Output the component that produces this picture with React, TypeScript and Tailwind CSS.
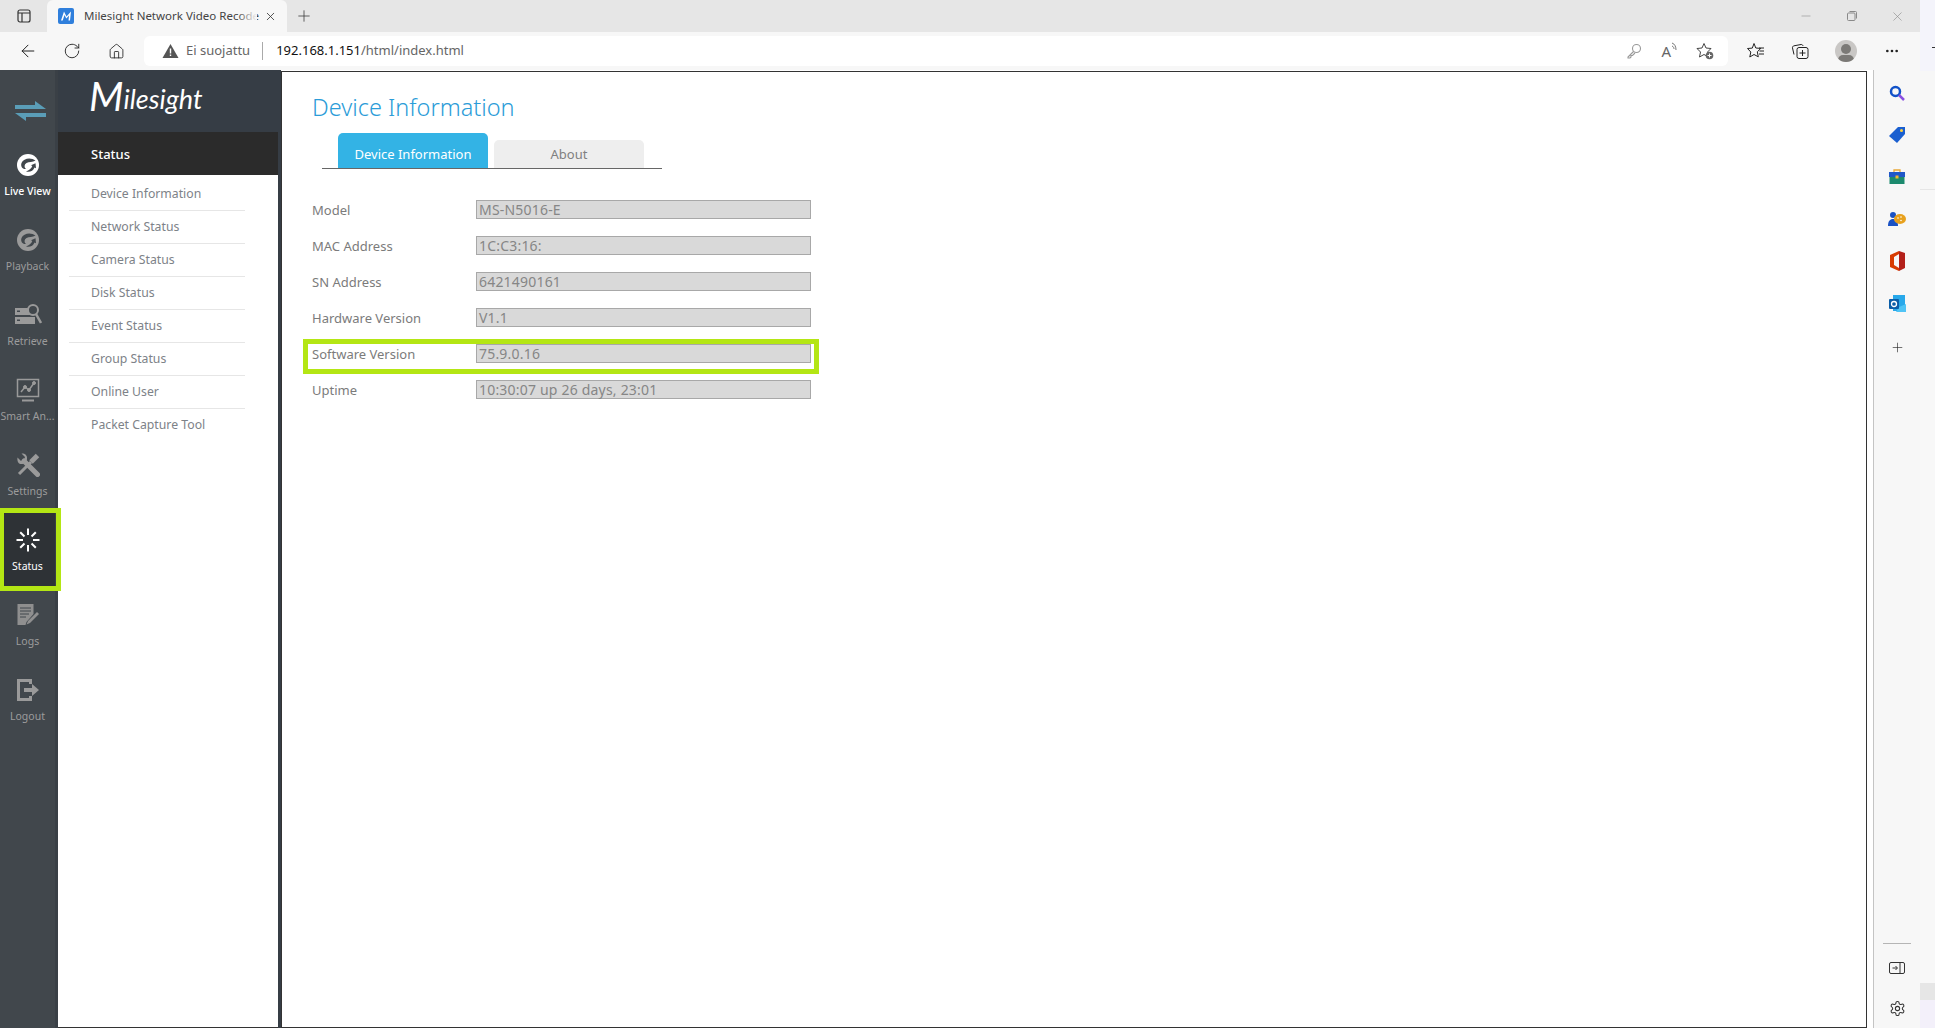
import { ArrowLeft, Ellipsis, Home, Minus, Plus, RotateCw, X } from 'lucide-react'

const font = "font-['Noto_Sans',sans-serif]"

const menuItems = [
  'Device Information',
  'Network Status',
  'Camera Status',
  'Disk Status',
  'Event Status',
  'Group Status',
  'Online User',
  'Packet Capture Tool',
]

const fields = [
  { label: 'Model', value: 'MS-N5016-E' },
  { label: 'MAC Address', value: '1C:C3:16:' },
  { label: 'SN Address', value: '6421490161' },
  { label: 'Hardware Version', value: 'V1.1' },
  { label: 'Software Version', value: '75.9.0.16' },
  { label: 'Uptime', value: '10:30:07 up 26 days, 23:01' },
]

function SwirlIcon({ color, bg }: { color: string; bg: string }) {
  return (
    <svg width="24" height="24" viewBox="0 0 24 24">
      <circle cx="12" cy="12" r="11" fill={color} />
      <path d="M19.500 7.500C15 4 7.500 5 5.500 10c-1.200 3.500 1 6.500 4.500 6-1.800-1.500-2-4.500.5-6 2.500-1.300 6-.5 9-2.500z" fill={bg} />
      <path d="M10 18.500c3.500 1 7.500-.5 8.500-4l1.500.8-.5-5-4.500 2 1.300.8c-.8 2.500-3.300 4.500-6.300 5.400z" fill={bg} />
    </svg>
  )
}

function RetrieveIcon() {
  return (
    <svg width="28" height="24" viewBox="0 0 28 24" fill="#9a9a9a">
      <rect x="1" y="5" width="16" height="7" />
      <rect x="1" y="14" width="20" height="7" />
      <rect x="3" y="7.500" width="3" height="1.500" fill="#41474c" />
      <rect x="3" y="16.500" width="3" height="1.500" fill="#41474c" />
      <circle cx="19" cy="7" r="5" fill="#41474c" stroke="#9a9a9a" strokeWidth="2" />
      <path d="M22 11l5 9" stroke="#9a9a9a" strokeWidth="2.500" />
    </svg>
  )
}

function SmartIcon() {
  return (
    <svg width="24" height="24" viewBox="0 0 24 24" fill="none" stroke="#9a9a9a">
      <rect x="1.500" y="1.500" width="21" height="17" strokeWidth="1.500" />
      <path d="M5 14l4-5 4 3 5-7" strokeWidth="1.500" />
      <circle cx="9" cy="9" r="1.500" fill="#9a9a9a" />
      <circle cx="13" cy="12" r="1.500" fill="#9a9a9a" />
      <circle cx="18" cy="5" r="1.500" fill="#9a9a9a" />
      <path d="M6 22.500h12" strokeWidth="2" />
    </svg>
  )
}

function SettingsIcon() {
  return (
    <svg width="24" height="24" viewBox="0 0 24 24" fill="none" stroke="#9a9a9a">
      {/* screwdriver */}
      <path d="M21.500 2.500L15 9" strokeWidth="5" />
      <path d="M15 9L3 21" strokeWidth="3" />
      {/* wrench */}
      <path d="M8 8l13.500 13.500" strokeWidth="5" strokeLinecap="round" />
      <path d="M1.500 4.500L5 8l3-1 1-3-3.500-3.500C8.500.2 11.500 2 11 6c-.3 3-3 5.500-6.500 5C2 10.500 1 7.500 1.500 4.500z" fill="#9a9a9a" stroke="none" />
    </svg>
  )
}

function SpinnerIcon() {
  const rays = [0, 45, 90, 135, 180, 225, 270, 315]
  return (
    <svg width="24" height="24" viewBox="0 0 24 24" stroke="#fff" strokeWidth="2">
      {rays.map((r) => (
        <line key={r} x1="12" y1={r % 90 === 0 ? 0.5 : 1} x2="12" y2="7" transform={`rotate(${r} 12 12)`} />
      ))}
    </svg>
  )
}

function LogsIcon() {
  return (
    <svg width="24" height="24" viewBox="0 0 24 24" fill="#8f8f8f">
      <path d="M1.500 1h16v10l-7 8-1 3h-8z" />
      <path d="M4 5h11M4 8h11M4 11h9M4 14h6" stroke="#41474c" strokeWidth="1" />
      <path d="M21 9l2 2-9 9-3.500 1.500L12 18z" />
    </svg>
  )
}

function LogoutIcon() {
  return (
    <svg width="24" height="24" viewBox="0 0 24 24" fill="#9a9a9a">
      <path d="M1 1h15v5h-3V4H4v16h9v-2h3v5H1z" />
      <path d="M8 10h8V6l7 6-7 6v-4H8z" />
    </svg>
  )
}

const railItems = [
  { label: 'Live View', icon: <SwirlIcon color="#ffffff" bg="#41474c" />, text: 'text-white font-medium' },
  { label: 'Playback', icon: <SwirlIcon color="#9a9a9a" bg="#41474c" />, text: 'text-[#9c9c9c]' },
  { label: 'Retrieve', icon: <RetrieveIcon />, text: 'text-[#9c9c9c]' },
  { label: 'Smart An...', icon: <SmartIcon />, text: 'text-[#9c9c9c]' },
  { label: 'Settings', icon: <SettingsIcon />, text: 'text-[#9c9c9c]' },
  { label: 'Status', icon: <SpinnerIcon />, text: 'text-white', active: true },
  { label: 'Logs', icon: <LogsIcon />, text: 'text-[#9c9c9c]' },
  { label: 'Logout', icon: <LogoutIcon />, text: 'text-[#9c9c9c]' },
]

function TabBar() {
  return (
    <div className="h-8 bg-[#e6e6e6] flex items-center shrink-0 text-[#333]">
      <div className="w-[47px] flex justify-center">
        <svg width="16" height="16" viewBox="0 0 16 16" fill="none" stroke="#333" strokeWidth="1.200">
          <rect x="2" y="2" width="12" height="12" rx="2" />
          <path d="M2 5h12M6 5v9" />
        </svg>
      </div>
      <div className="w-[240px] h-8 bg-[#f7f7f7] rounded-t-md flex items-center pl-[11px] relative">
        <svg width="16" height="16" viewBox="0 0 16 16" className="shrink-0">
          <rect width="16" height="16" rx="2" fill="#2f7fdc" />
          <path d="M3 12.500L6 3.500l2.500 5L13 3.500 12 12.500h-1.500l.5-5-2.700 3L6.500 7 4.700 12.500z" fill="#fff" />
        </svg>
        <span className="ml-[10px] whitespace-nowrap text-[11.500px] text-[#444]">
          Milesight Network Video Recode
        </span>
        <div className="absolute left-[190px] top-0 w-[20px] h-8 bg-gradient-to-r from-transparent to-[#f7f7f7]" />
        <X size={13} strokeWidth={1.500} className="absolute left-[217px] top-[10px]" />
      </div>
      <Plus size={18} strokeWidth={1} className="ml-[8px]" />
      <div className="ml-auto flex items-center text-[#8a8a8a]">
        <Minus size={14} strokeWidth={1} />
        <svg width="12" height="12" viewBox="0 0 12 12" fill="none" stroke="#8a8a8a" className="ml-[33px]">
          <rect x="1.500" y="3" width="7.500" height="7.500" rx="1" />
          <path d="M3.500 1.500h6a1 1 0 0 1 1 1v6" />
        </svg>
        <X size={15} strokeWidth={1} className="ml-[32px] mr-[15px]" />
      </div>
    </div>
  )
}

function Toolbar() {
  return (
    <div className="h-[38px] bg-[#f7f7f7] flex items-center shrink-0 text-[#222]">
      <ArrowLeft size={20} strokeWidth={1.200} className="ml-[18px]" />
      <RotateCw size={18} strokeWidth={1.200} className="ml-[25px]" />
      <Home size={17} strokeWidth={1.200} className="ml-[27px]" />
      <div className="ml-[19px] w-[1584px] h-[30px] bg-white rounded-md flex items-center pl-[18px] text-[13px]">
        <svg width="17" height="16" viewBox="0 0 17 16">
          <path d="M8.500 1L16.500 15H.5z" fill="#555" />
          <rect x="7.800" y="5.500" width="1.400" height="5" fill="#fff" />
          <rect x="7.800" y="11.500" width="1.400" height="1.500" fill="#fff" />
        </svg>
        <span className="ml-[7px] text-[#666]">Ei suojattu</span>
        <span className="ml-[12px] w-px h-[18px] bg-[#aaa]" />
        <span className="ml-[13px] text-[#111]">192.168.1.151<span className="text-[#666]">/html/index.html</span></span>
        <div className="ml-auto flex items-center text-[#777]">
          <svg width="16" height="16" viewBox="0 0 16 16" fill="none" stroke="#999" strokeWidth="1.100">
            <circle cx="10.500" cy="5.500" r="4" />
            <path d="M7.500 8.500L2 14v1h2l1-1v-1.500h1.500L9 10" />
          </svg>
          <span className="ml-[19px] text-[15px] leading-none text-[#666]">A</span>
          <svg width="7" height="12" viewBox="0 0 7 12" fill="none" stroke="#777" className="mb-[6px]">
            <path d="M1 1c3 1 4 4 4 7M1 4c1.500.5 2 2 2 3" />
          </svg>
          <svg width="18" height="18" viewBox="0 0 18 18" fill="none" stroke="#444" className="ml-[18px] mr-[14px]">
            <path d="M8 1.500l2 4.500 5 .5-3.500 3.500 1 5-4.500-2.500L3.500 15l1-5L1 6.500 6 6z" />
            <circle cx="13.500" cy="13.500" r="3.800" fill="#666" stroke="none" />
            <path d="M13.500 11.500v4M11.500 13.500h4" stroke="#fff" />
          </svg>
        </div>
      </div>
      <svg width="18" height="18" viewBox="0 0 18 18" fill="none" stroke="#222" className="ml-[19px]">
        <path d="M7 1.500l1.800 4.500 5 .4-3.500 3.400 1 5L7 12.500 2.800 15l1-5L.5 6.500l4.800-.4z" />
        <path d="M12 6h5M12.500 9h4.500M12 12h5" />
      </svg>
      <svg width="18" height="18" viewBox="0 0 18 18" fill="none" stroke="#222" className="ml-[26px]">
        <path d="M3 12.500L1.500 6c-.2-1 .4-2 1.500-2.200L10 2.500c1-.1 1.800.4 2 1.500" />
        <rect x="6" y="5.500" width="11" height="11" rx="2" />
        <path d="M11.500 8v6M8.500 11h6" />
      </svg>
      <div className="ml-[26px] w-[22px] h-[22px] rounded-full bg-[#c9c7c5] relative overflow-hidden">
        <div className="absolute left-[6px] top-[4px] w-[10px] h-[10px] rounded-full bg-[#7b7976]" />
        <div className="absolute left-[3px] top-[15px] w-[16px] h-[10px] rounded-full bg-[#7b7976]" />
      </div>
      <Ellipsis size={16} className="ml-[27px]" />
    </div>
  )
}

function Rail() {
  return (
    <div className="w-[58px] shrink-0 bg-[#3a4046] flex">
      <div className="w-[55px] bg-[#41474c] flex flex-col">
        <div className="h-[68px] pl-[15px] pt-[31px]">
          <svg width="31" height="21" viewBox="0 0 31 21" fill="#5a9db7" className="block">
            <path d="M0 4h20V0l11 8H0z" />
            <path d="M0 12h31v4H11v4z" />
          </svg>
        </div>
        {railItems.map((item) => (
          <div
            key={item.label}
            className={`h-[75px] flex flex-col items-center pt-[15px] ${item.active ? 'bg-[#2e3236]' : ''}`}
          >
            <div className="h-[24px] flex items-center justify-center">{item.icon}</div>
            <span className={`mt-[5px] text-[10.500px] leading-[18px] text-center whitespace-nowrap ${item.text}`}>
              {item.label}
            </span>
          </div>
        ))}
      </div>
    </div>
  )
}

function Menu() {
  return (
    <div className="w-[223px] shrink-0 flex flex-col bg-[#363d45]">
      <div className="h-[62px] pl-[31px] pb-[10px] flex items-center text-white italic font-['Lato',sans-serif]">
        <span className="text-[40px] leading-none">M</span>
        <span className="text-[27px] leading-none mt-[5px]">ilesight</span>
      </div>
      <div className="flex-1 flex flex-col w-[220px] bg-white border-b border-[#333]">
        <div className="h-[43px] bg-[#2b2b2b] text-white text-[13px] font-medium flex items-center pl-[33px] pt-[2px]">Status</div>
        <div className="pt-[3px] pl-[11px]">
          {menuItems.map((item, i) => (
            <div
              key={item}
              className={`h-[33px] w-[176px] flex items-center pl-[22px] text-[12.250px] text-[#7d8288] whitespace-nowrap ${
                i < menuItems.length - 1 ? 'border-b border-[#e6e6e6]' : ''
              }`}
            >
              {item}
            </div>
          ))}
        </div>
      </div>
    </div>
  )
}

function DeviceInfo() {
  return (
    <div className="w-[1586px] shrink-0 h-[957px] mt-px border border-[#333] bg-white pl-[30px]">
      <h1 className="text-[23.500px] font-light leading-[34px] mt-[18px] text-[#2b9cd8]">Device Information</h1>
      <div className="ml-[10px] mt-[9px] w-[340px] h-[36px] flex items-end gap-[6px] pl-[16px] border-b border-[#666]">
        <div className="w-[150px] h-[35px] pt-[8px] bg-[#33b3e5] rounded-t-[5px] text-white text-[13px] flex items-center justify-center">
          Device Information
        </div>
        <div className="w-[150px] h-[28px] pt-[2px] bg-[#eeeeee] rounded-t-[5px] text-[#808080] text-[13px] flex items-center justify-center">
          About
        </div>
      </div>
      <div className="mt-[31px] flex flex-col gap-[17px]">
        {fields.map((f) => (
          <div key={f.label} className="flex items-center h-[19px] text-[13px]">
            <span className="w-[164px] text-[#7b7b7b] pt-[3px]">{f.label}</span>
            <div className="w-[335px] h-[19px] bg-[#d9d9d9] border border-[#a8a8a8] pl-[2px] text-[14px] tracking-[0.2px] leading-[17px] text-[#868686]">
              {f.value}
            </div>
          </div>
        ))}
      </div>
    </div>
  )
}

function SidePanel() {
  return (
    <div className="flex-1 bg-[#f7f7f7] flex flex-col items-center pt-[2px] border-l border-[#c4c4c4] ml-[6px]">
      <div className="flex flex-col items-center">
        <div className="h-[42px] flex items-center">
          <svg width="16" height="16" viewBox="0 0 16 16" fill="none">
            <circle cx="6.500" cy="6.500" r="4.500" stroke="#1252c8" strokeWidth="2.500" />
            <path d="M10 10l5 5" stroke="#8a4fe0" strokeWidth="2.500" />
          </svg>
        </div>
        <div className="h-[42px] flex items-center">
          <svg width="16" height="16" viewBox="0 0 16 16">
            <path d="M9 0h7v7l-8 9-8-7z" fill="#1a5fd0" />
            <circle cx="12.500" cy="3.500" r="1.500" fill="#ffd23c" />
          </svg>
        </div>
        <div className="h-[42px] flex items-center">
          <svg width="18" height="16" viewBox="0 0 18 16">
            <path d="M6 3V1h6v2" fill="none" stroke="#e9a93a" strokeWidth="1.300" />
            <rect x="1" y="3" width="16" height="5" fill="#2058c8" />
            <rect x="1.500" y="8" width="15" height="7" fill="#1c8a6e" />
            <rect x="7.500" y="6.500" width="3" height="3" fill="#f5b82e" />
          </svg>
        </div>
        <div className="h-[42px] flex items-center">
          <svg width="18" height="16" viewBox="0 0 18 16">
            <circle cx="5" cy="4" r="3" fill="#1a52c4" />
            <path d="M0 15c0-5 2-7 5-7s5 2 5 7z" fill="#1a52c4" />
            <ellipse cx="12" cy="8" rx="6" ry="5" fill="#e8a11d" />
            <circle cx="10" cy="7" r=".8" fill="#fff" />
            <circle cx="13" cy="6" r=".8" fill="#fff" />
            <circle cx="13" cy="9.500" r=".8" fill="#fff" />
          </svg>
        </div>
        <div className="h-[42px] flex items-center">
          <svg width="16" height="20" viewBox="0 0 16 20">
            <path d="M1 4L10 0v3L5 6v8l5 3v3l-9-4z" fill="#d83b01" />
            <path d="M10 0l6 2v15l-6 3z" fill="#b3201a" />
          </svg>
        </div>
        <div className="h-[42px] flex items-center">
          <svg width="17" height="17" viewBox="0 0 17 17">
            <rect x="4" y="0" width="12" height="16" fill="#28a8ea" />
            <path d="M10 12l7-3v8H7z" fill="#50c4f5" />
            <rect x="0" y="4" width="10" height="10" rx="1" fill="#0a5ea8" />
            <circle cx="5" cy="9" r="2.500" fill="none" stroke="#fff" strokeWidth="1.300" />
          </svg>
        </div>
        <Plus size={15} strokeWidth={1} className="text-[#222] mt-[16px]" />
      </div>
      <div className="mt-auto flex flex-col items-center pb-[11px]">
        <div className="w-[28px] h-px bg-[#b5b5b5]" />
        <svg width="16" height="12" viewBox="0 0 16 12" fill="none" stroke="#333" className="mt-[18px]">
          <rect x=".5" y=".5" width="15" height="11" rx="1.500" />
          <path d="M11 .5v11M3.500 6h4.500M6.500 4l2 2-2 2" />
        </svg>
        <svg width="17" height="17" viewBox="0 0 24 24" fill="none" stroke="#333" strokeWidth="1.500" className="mt-[26px]">
          <path d="M12.220 2h-.44a2 2 0 0 0-2 2v.18a2 2 0 0 1-1 1.730l-.43.25a2 2 0 0 1-2 0l-.15-.08a2 2 0 0 0-2.730.73l-.22.38a2 2 0 0 0 .73 2.730l.15.1a2 2 0 0 1 1 1.720v.51a2 2 0 0 1-1 1.740l-.15.09a2 2 0 0 0-.73 2.730l.22.38a2 2 0 0 0 2.730.73l.15-.08a2 2 0 0 1 2 0l.43.25a2 2 0 0 1 1 1.730V20a2 2 0 0 0 2 2h.44a2 2 0 0 0 2-2v-.18a2 2 0 0 1 1-1.730l.43-.25a2 2 0 0 1 2 0l.15.08a2 2 0 0 0 2.730-.73l.22-.39a2 2 0 0 0-.73-2.730l-.15-.08a2 2 0 0 1-1-1.740v-.5a2 2 0 0 1 1-1.740l.15-.09a2 2 0 0 0 .73-2.730l-.22-.38a2 2 0 0 0-2.730-.73l-.15.08a2 2 0 0 1-2 0l-.43-.25a2 2 0 0 1-1-1.730V4a2 2 0 0 0-2-2z" />
          <circle cx="12" cy="12" r="3" />
        </svg>
      </div>
    </div>
  )
}

export default function App() {
  return (
    <div className={`w-[1935px] h-[1028px] overflow-hidden flex relative ${font}`}>
      <div className="w-[1920px] h-full flex flex-col shrink-0">
        <TabBar />
        <Toolbar />
        <div className="flex-1 flex min-h-0 bg-white">
          <Rail />
          <Menu />
          <DeviceInfo />
          <SidePanel />
        </div>
      </div>
      <div className="flex-1 flex flex-col">
        <div className="h-[71px] bg-[#f4f4fb] flex justify-end pt-[47px]">
          <div className="w-[3px] h-px bg-[#333]" />
        </div>
        <div className="h-[119px] bg-[#f7f7f7] border-b border-[#e6e6e6]" />
        <div className="flex-1 bg-[#f8f8f8]" />
        <div className="h-[17px] bg-[#e6e6e6]" />
        <div className="h-[28px] bg-[#f3f0fa]" />
      </div>
      {/* green annotation boxes */}
      <div className="absolute left-0 top-[508px] w-[61px] h-[83px] border-[5px] border-l-[4px] border-[#b4e614]" />
      <div className="absolute left-[303px] top-[339px] w-[516px] h-[35px] border-[5px] border-[#b4e614]" />
    </div>
  )
}
